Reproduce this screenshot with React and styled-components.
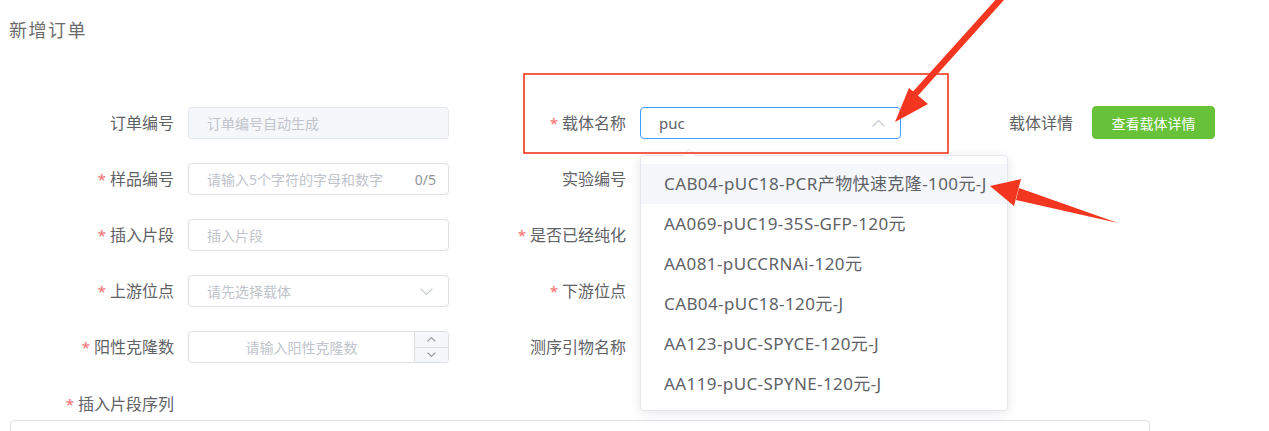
import React from 'react';
import styled, { createGlobalStyle } from 'styled-components';

const GlobalStyle = createGlobalStyle`
  html, body {
    margin: 0;
    padding: 0;
    overflow: hidden;
    background: #fff;
  }
  body {
    font-family: "Noto Sans", "Noto Sans CJK SC", sans-serif;
  }
`;

const options = [
  'CAB04-pUC18-PCR产物快速克隆-100元-J',
  'AA069-pUC19-35S-GFP-120元',
  'AA081-pUCCRNAi-120元',
  'CAB04-pUC18-120元-J',
  'AA123-pUC-SPYCE-120元-J',
  'AA119-pUC-SPYNE-120元-J',
];

function Arrow({ up, w = 13, h = 7 }) {
  return (
    <svg width={w} height={h} viewBox={`0 0 ${w} ${h}`} fill="none">
      <polyline
        points={up ? `0.6,${h - 0.6} ${w / 2},0.6 ${w - 0.6},${h - 0.6}` : `0.6,0.6 ${w / 2},${h - 0.6} ${w - 0.6},0.6`}
        stroke="currentColor"
        strokeWidth="1.1"
      />
    </svg>
  );
}

function Label({ width, pad, required, children }) {
  return (
    <LabelBox width={width} pad={pad}>
      {required && <Star>*</Star>}
      {children}
    </LabelBox>
  );
}

function App() {
  return (
    <Page>
      <GlobalStyle />
      <Title>新增订单</Title>

      <Form>
        <Row>
          <Item>
            <Label width={188}>订单编号</Label>
            <Input disabled>订单编号自动生成</Input>
          </Item>
          <Item>
            <Label width={191} required>载体名称</Label>
            <SelectWrap>
              <Input focused value>
                puc
                <Suffix><Arrow up /></Suffix>
              </Input>
              <Dropdown>
                {options.map((o, i) => (
                  <Option key={o} hover={i === 0}>{o}</Option>
                ))}
              </Dropdown>
            </SelectWrap>
          </Item>
          <Item>
            <Label width={191} pad={19}>载体详情</Label>
            <GreenButton>查看载体详情</GreenButton>
          </Item>
        </Row>

        <Row>
          <Item>
            <Label width={188} required>样品编号</Label>
            <Input>
              请输入5个字符的字母和数字
              <Counter>0/5</Counter>
            </Input>
          </Item>
          <Item>
            <Label width={191}>实验编号</Label>
          </Item>
        </Row>

        <Row>
          <Item>
            <Label width={188} required>插入片段</Label>
            <Input>插入片段</Input>
          </Item>
          <Item>
            <Label width={191} required>是否已经纯化</Label>
          </Item>
        </Row>

        <Row>
          <Item>
            <Label width={188} required>上游位点</Label>
            <Input>
              请先选择载体
              <Suffix><Arrow /></Suffix>
            </Input>
          </Item>
          <Item>
            <Label width={191} required>下游位点</Label>
          </Item>
        </Row>

        <Row>
          <Item>
            <Label width={188} required>阳性克隆数</Label>
            <NumberInput>
              <NumberText>请输入阳性克隆数</NumberText>
              <Controls>
                <ControlBtn><Arrow up w={9} h={5} /></ControlBtn>
                <ControlBtn bottom><Arrow w={9} h={5} /></ControlBtn>
              </Controls>
            </NumberInput>
          </Item>
          <Item>
            <Label width={191}>测序引物名称</Label>
          </Item>
        </Row>

        <SeqLabel>
          <Label width={188} required>插入片段序列</Label>
        </SeqLabel>
        <TextArea />
      </Form>

      <Marks viewBox="0 0 1269 431" width="1269" height="431">
        <rect x="524" y="74" width="424" height="79" fill="none" stroke="#f2361f" strokeWidth="1.6" />
        <polygon points="999,-4 1004,0 914,100 909,96" fill="#f2361f" />
        <polygon points="895,122 909,88 928,104" fill="#f2361f" />
        <polygon points="1118,223 1016,200 1019,188" fill="#f2361f" />
        <polygon points="990,186 1021,179 1014,206" fill="#f2361f" />
      </Marks>
    </Page>
  );
}

export default App;

const Page = styled.div`
  position: relative;
  width: 1269px;
  height: 431px;
  overflow: hidden;
  padding: 18px 0 0 9px;
  box-sizing: border-box;
`;

const Title = styled.div`
  font-size: 18px;
  line-height: 24px;
  color: #6b6b6b;
  letter-spacing: 1.5px;
`;

const Form = styled.div`
  margin-top: 65px;
  margin-left: -9px;
  display: flex;
  flex-direction: column;
`;

const Row = styled.div`
  display: flex;
  height: 32px;
  margin-bottom: 24px;
`;

const Item = styled.div`
  display: flex;
  align-items: center;
`;

const LabelBox = styled.div`
  width: ${p => p.width}px;
  padding-right: ${p => p.pad || 14}px;
  box-sizing: border-box;
  text-align: right;
  font-size: 16px;
  color: #606266;
  line-height: 32px;
  white-space: nowrap;
`;

const Star = styled.span`
  color: #f56c6c;
  margin-right: 4px;
  font-size: 15px;
`;

const Input = styled.div`
  position: relative;
  width: 261px;
  height: 32px;
  box-sizing: border-box;
  display: flex;
  align-items: center;
  padding: 0 18px;
  border: 1px solid #dcdfe6;
  border-radius: 4px;
  background: ${p => (p.disabled ? '#f5f7fa' : '#fff')};
  border-color: ${p => (p.disabled ? '#e4e7ed' : p.focused ? '#409eff' : '#dcdfe6')};
  font-size: ${p => (p.value ? 15 : 14)}px;
  color: ${p => (p.value ? '#606266' : '#c0c4cc')};
`;

const Suffix = styled.span`
  position: absolute;
  right: 15px;
  top: 12px;
  color: #c0c4cc;
  display: flex;
`;

const Counter = styled.span`
  position: absolute;
  right: 12px;
  font-size: 14px;
  color: #909399;
`;

const SelectWrap = styled.div`
  position: relative;
`;

const Dropdown = styled.div`
  position: absolute;
  top: 48px;
  left: 0;
  width: 368px;
  box-sizing: border-box;
  padding: 8px 0 6px;
  background: #fff;
  border: 1px solid #e4e7ed;
  border-radius: 4px;
  box-shadow: 0 2px 12px rgba(0, 0, 0, 0.1);
  z-index: 10;

  &::before,
  &::after {
    content: "";
    position: absolute;
    left: 42px;
    border: 6px solid transparent;
    border-top-width: 0;
  }
  &::before {
    top: -7px;
    border-bottom-color: #e4e7ed;
  }
  &::after {
    top: -6px;
    border-bottom-color: #fff;
  }
`;

const Option = styled.div`
  height: 40px;
  line-height: 40px;
  padding-left: 23px;
  font-size: 17px;
  letter-spacing: 0.4px;
  color: #606266;
  white-space: nowrap;
  background: ${p => (p.hover ? '#f5f7fa' : '#fff')};
`;

const GreenButton = styled.button`
  width: 123px;
  height: 33px;
  margin-top: -1px;
  border: 1px solid #67c23a;
  border-radius: 4px;
  background: #67c23a;
  color: #fff;
  font-family: inherit;
  font-size: 14px;
  padding: 0;
  cursor: pointer;
`;

const NumberInput = styled.div`
  width: 261px;
  height: 32px;
  box-sizing: border-box;
  display: flex;
  border: 1px solid #dcdfe6;
  border-radius: 4px;
  overflow: hidden;
`;

const NumberText = styled.div`
  flex: 1;
  display: flex;
  align-items: center;
  justify-content: center;
  font-size: 14px;
  color: #c0c4cc;
`;

const Controls = styled.div`
  width: 33px;
  display: flex;
  flex-direction: column;
  border-left: 1px solid #dcdfe6;
  background: #f5f7fa;
`;

const ControlBtn = styled.div`
  flex: 1;
  display: flex;
  align-items: center;
  justify-content: center;
  color: #909399;
  border-top: ${p => (p.bottom ? '1px solid #dcdfe6' : 'none')};
`;

const SeqLabel = styled.div`
  height: 33px;
  display: flex;
  align-items: center;
`;

const TextArea = styled.div`
  margin: 0 0 0 10px;
  width: 1140px;
  height: 80px;
  box-sizing: border-box;
  border: 1px solid #dcdfe6;
  border-radius: 4px;
`;

const Marks = styled.svg`
  position: absolute;
  left: 0;
  top: 0;
  pointer-events: none;
  z-index: 20;
`;
